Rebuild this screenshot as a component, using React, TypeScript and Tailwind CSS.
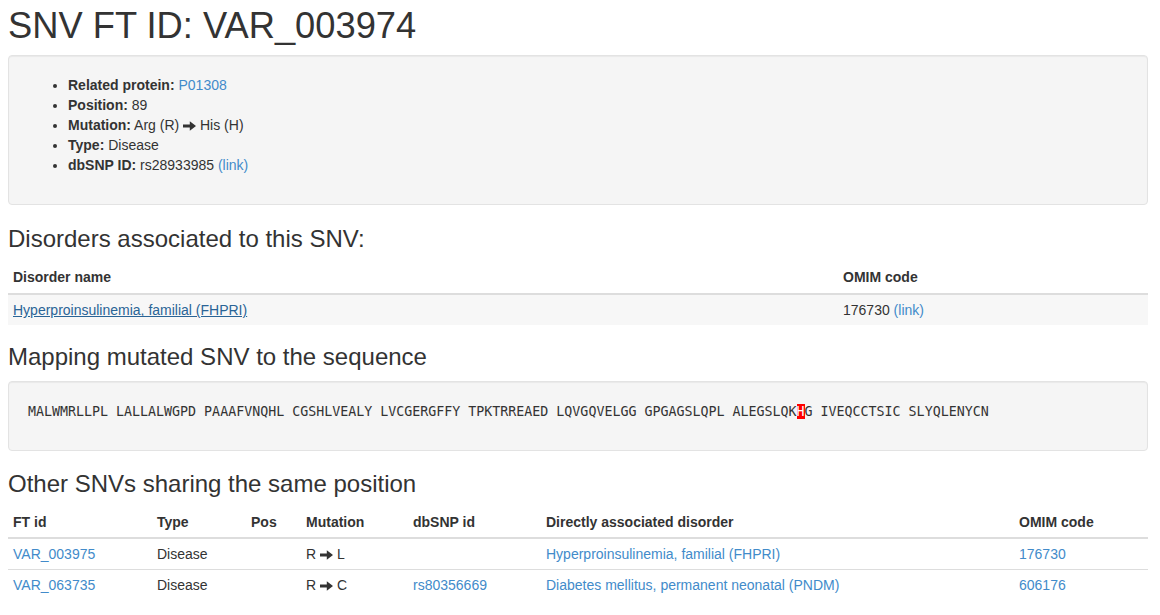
import React from "react";

function Arrow() {
  return (
    <svg
      viewBox="0 0 13 10"
      className="inline-block h-[10px] w-[13px] align-[-1px] fill-[#333]"
    >
      <path d="M0 3.6h6.8V0.2L13 5l-6.2 4.8V6.4H0z" />
    </svg>
  );
}

const link = "text-[#428bca]";

const others = [
  {
    id: "VAR_003975",
    type: "Disease",
    pos: "",
    from: "R",
    to: "L",
    dbsnp: "",
    disorder: "Hyperproinsulinemia, familial (FHPRI)",
    omim: "176730",
  },
  {
    id: "VAR_063735",
    type: "Disease",
    pos: "",
    from: "R",
    to: "C",
    dbsnp: "rs80356669",
    disorder: "Diabetes mellitus, permanent neonatal (PNDM)",
    omim: "606176",
  },
];

const seqBefore =
  "MALWMRLLPL LALLALWGPD PAAAFVNQHL CGSHLVEALY LVCGERGFFY TPKTRREAED LQVGQVELGG GPGAGSLQPL ALEGSLQK";
const seqAfter = "G IVEQCCTSIC SLYQLENYCN";

export default function App() {
  return (
    <div className="min-h-screen bg-white px-2 pt-[6px] font-['Liberation_Sans',Arial,sans-serif] text-[14px] leading-[20px] text-[#333]">
      <div className="w-[1140px]">
        <h1 className="mb-[9px] text-[36.3px] font-normal leading-[1.1]">
          SNV FT ID: VAR_003974
        </h1>

        <div className="mb-[21px] rounded-[4px] border border-[#e3e3e3] bg-[#f5f5f5] p-[19px] shadow-[inset_0_1px_1px_rgba(0,0,0,0.05)]">
          <ul className="mb-[10px] list-disc pl-10">
            <li>
              <b>Related protein:</b> <span className={link}>P01308</span>
            </li>
            <li>
              <b>Position:</b> 89
            </li>
            <li>
              <b>Mutation:</b> Arg (R) <Arrow /> His (H)
            </li>
            <li>
              <b>Type:</b> Disease
            </li>
            <li>
              <b>dbSNP ID:</b> rs28933985 <span className={link}>(link)</span>
            </li>
          </ul>
        </div>

        <h3 className="mb-[10px] text-[24px] font-normal leading-[1.1]">
          Disorders associated to this SNV:
        </h3>
        <table className="mb-[19px] w-full table-fixed border-collapse text-left">
          <thead>
            <tr>
              <th className="w-[830px] border-b-2 border-[#ddd] px-[5px] pt-[5px] pb-[6px] font-bold">
                Disorder name
              </th>
              <th className="border-b-2 border-[#ddd] px-[5px] pt-[5px] pb-[6px] font-bold">
                OMIM code
              </th>
            </tr>
          </thead>
          <tbody>
            <tr className="bg-[#f7f7f7]">
              <td className="border-t border-[#ddd] px-[5px] py-[5px]">
                <span className="text-[#2a6496] underline">
                  Hyperproinsulinemia, familial (FHPRI)
                </span>
              </td>
              <td className="border-t border-[#ddd] px-[5px] py-[5px]">
                176730 <span className={link}>(link)</span>
              </td>
            </tr>
          </tbody>
        </table>

        <h3 className="mb-[10px] text-[24px] font-normal leading-[1.1]">
          Mapping mutated SNV to the sequence
        </h3>
        <div className="mb-5 rounded-[4px] border border-[#e3e3e3] bg-[#f5f5f5] p-[19px] shadow-[inset_0_1px_1px_rgba(0,0,0,0.05)]">
          <div className="mb-[9px] whitespace-pre font-['DejaVu_Sans_Mono',monospace] text-[13.3px] leading-[21px]">
            {seqBefore}
            <span className="bg-[#f00] text-white">H</span>
            {seqAfter}
          </div>
        </div>

        <h3 className="mb-[10px] text-[24px] font-normal leading-[1.1]">
          Other SNVs sharing the same position
        </h3>
        <table className="mb-5 w-full table-fixed border-collapse text-left">
          <thead>
            <tr>
              {[
                ["FT id", "w-[144px]"],
                ["Type", "w-[94px]"],
                ["Pos", "w-[55px]"],
                ["Mutation", "w-[107px]"],
                ["dbSNP id", "w-[133px]"],
                ["Directly associated disorder", "w-[473px]"],
                ["OMIM code", ""],
              ].map(([label, w]) => (
                <th
                  key={label}
                  className={`${w} border-b-2 border-[#ddd] px-[5px] py-[5px] font-bold`}
                >
                  {label}
                </th>
              ))}
            </tr>
          </thead>
          <tbody>
            {others.map((r) => (
              <tr key={r.id}>
                <td className="border-t border-[#ddd] px-[5px] py-[5px]">
                  <span className={link}>{r.id}</span>
                </td>
                <td className="border-t border-[#ddd] px-[5px] py-[5px]">
                  {r.type}
                </td>
                <td className="border-t border-[#ddd] px-[5px] py-[5px]">
                  {r.pos}
                </td>
                <td className="border-t border-[#ddd] px-[5px] py-[5px]">
                  {r.from} <Arrow /> {r.to}
                </td>
                <td className="border-t border-[#ddd] px-[5px] py-[5px]">
                  <span className={link}>{r.dbsnp}</span>
                </td>
                <td className="border-t border-[#ddd] px-[5px] py-[5px]">
                  <span className={link}>{r.disorder}</span>
                </td>
                <td className="border-t border-[#ddd] px-[5px] py-[5px]">
                  <span className={link}>{r.omim}</span>
                </td>
              </tr>
            ))}
          </tbody>
        </table>
      </div>
    </div>
  );
}
